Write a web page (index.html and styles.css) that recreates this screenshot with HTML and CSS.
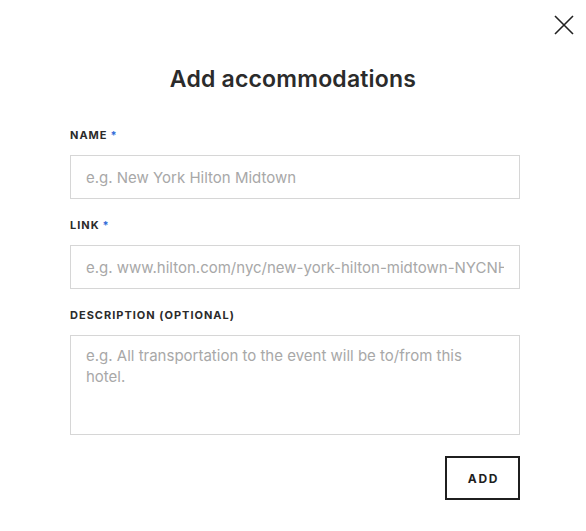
FILE: index.html
```html
<!DOCTYPE html>
<html>
<head>
<meta charset="utf-8">
<link rel="stylesheet" href="styles.css">
</head>
<body>
<div class="modal">
  <button class="close" aria-label="Close">
    <svg width="20" height="20" viewBox="0 0 20 20"><path d="M1 1 L19 19 M19 1 L1 19" stroke="#222" stroke-width="1.6" fill="none"/></svg>
  </button>
  <h1 class="title">Add accommodations</h1>
  <form class="form">
    <div class="field">
      <label class="label" for="name">NAME<span class="req">*</span></label>
      <input id="name" class="input" type="text" placeholder="e.g. New York Hilton Midtown">
    </div>
    <div class="field">
      <label class="label" for="link">LINK<span class="req">*</span></label>
      <input id="link" class="input" type="text" placeholder="e.g. www.hilton.com/nyc/new-york-hilton-midtown-NYCNHHH">
    </div>
    <div class="field">
      <label class="label" for="desc">DESCRIPTION (OPTIONAL)</label>
      <textarea id="desc" class="input area" placeholder="e.g. All transportation to the event will be to/from this hotel."></textarea>
    </div>
    <div class="actions">
      <button type="button" class="add">ADD</button>
    </div>
  </form>
</div>
</body>
</html>
```
FILE: styles.css
```css
html, body { margin: 0; padding: 0; background: #fff; }
body { font-family: Inter, "Liberation Sans", Arial, sans-serif; color: #262626; }
.modal { position: relative; width: 586px; height: 531px; }
.close { position: absolute; top: 15px; right: 12px; width: 20px; height: 20px; padding: 0; border: 0; background: none; }
.close svg { display: block; }
.title { margin: 0; padding-top: 64px; font-size: 23px; line-height: 30px; font-weight: 600; text-align: center; color: #2b2b2b; letter-spacing: 0.2px; }
.form { width: 450px; margin: 34px 0 0 70px; display: flex; flex-direction: column; gap: 19px; }
.field { display: flex; flex-direction: column; gap: 13px; }
.label { font-size: 11px; line-height: 14px; font-weight: 700; letter-spacing: 1px; color: #2b2b2b; }
.req { color: #2f6bd8; margin-left: 3px; }
.input { box-sizing: border-box; width: 100%; height: 44px; margin: 0; border: 1px solid #d6d6d6; border-radius: 0; padding: 0 15px; font-family: inherit; font-size: 15px; color: #333; background: #fff; outline: none; }
.input::placeholder { color: #a8a8a8; opacity: 1; }
.area { display: block; height: 100px; resize: none; line-height: 21px; padding: 9px 15px; }
.actions { display: flex; justify-content: flex-end; margin-top: 2px; }
.add { box-sizing: border-box; width: 75px; height: 44px; border: 2px solid #1f1f1f; background: #fff; font-family: inherit; font-size: 12px; font-weight: 700; letter-spacing: 1.8px; color: #1f1f1f; padding: 0 0 0 2px; }
```
